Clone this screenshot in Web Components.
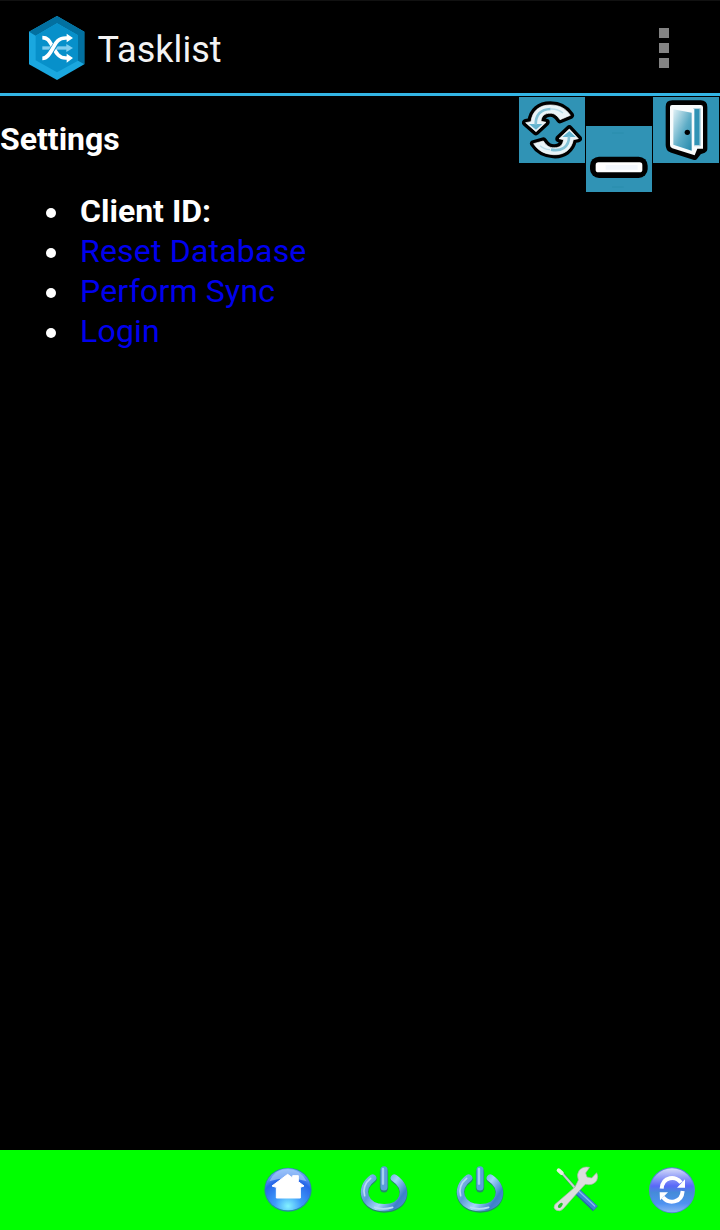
<!DOCTYPE html>
<html lang="en"><head><meta charset="utf-8"><title>Tasklist</title>
<style>html,body{margin:0;height:100%;background:#000}body{overflow:hidden}</style></head>
<body>
<task-app>
  <app-header slot="header">Tasklist</app-header>
  <settings-panel>
    <span slot="title">Settings</span>
    <setting-item strong>Client ID:</setting-item>
    <setting-item>Reset Database</setting-item>
    <setting-item>Perform Sync</setting-item>
    <setting-item>Login</setting-item>
  </settings-panel>
  <quick-actions slot="actions"></quick-actions>
  <bottom-bar slot="footer"></bottom-bar>
</task-app>
<script>
const define = (name, html) => {
  const t = document.createElement('template');
  t.innerHTML = html;
  customElements.define(name, class extends HTMLElement {
    constructor() { super(); this.attachShadow({mode: 'open'}).append(t.content.cloneNode(true)); }
  });
};

define('task-app', `<style>
:host{display:flex;flex-direction:column;width:720px;height:1230px;background:#000;color:#fff;font-family:Roboto,"Liberation Sans",sans-serif}
main{flex:1;display:flex;justify-content:space-between;align-items:flex-start}
</style><slot name="header"></slot><main><slot></slot><slot name="actions"></slot></main><slot name="footer"></slot>`);

define('app-header', `<style>
:host{display:flex;align-items:center;box-sizing:border-box;height:96px;border-top:1px solid #111;border-bottom:3px solid #33b5e5;padding:0 51px 0 28px;color:#f3f3f3}
.logo{width:57px;height:66px;margin-right:12.5px;margin-top:2px}
h1{flex:1;margin:5px 0 0;font-size:36px;font-weight:400;letter-spacing:.05px;line-height:44px}
.menu{display:grid;gap:5px;margin-top:2px}.menu i{width:10px;height:10px;background:#838383}
</style>
<svg class="logo" viewBox="24 15 171 198">
<path fill="#1aa7df" d="M111 18 193 65V163L111 210 27 163V65z"/>
<path fill="#0270a0" d="M111 18 193 65V163L174 152V76L111 40 47 77 27 65z"/>
<path fill="#0790ca" d="M111 40 174 76V152L111 187 47 151V77z"/>
<g fill="none" stroke-width="10"><path stroke="#7fcdef" d="M67 114H143"/><path fill="#7fcdef" stroke="none" d="M139 102 159 114 139 126z"/>
<path stroke="#fff" stroke-width="11" d="M67 83C85 83 89 95 98 110S115 144 137 144H143"/>
<path stroke="#0790ca" stroke-width="16" d="M90 129 110 98"/>
<path stroke="#fff" stroke-width="11" d="M67 145C83 145 91 128 99 114S113 84 137 84H143"/></g>
<path fill="#fff" d="M140 71 159 84 140 97zM140 131 159 144 140 158z"/></svg>
<h1><slot></slot></h1><div class="menu"><i></i><i></i><i></i></div>`);

define('settings-panel', `<style>
:host{display:block;flex:1}
h2{margin:23px 0 32px;font-size:32px;line-height:40px;font-weight:700}
ul{margin:0;padding:0}
</style><h2><slot name="title"></slot></h2><ul><slot></slot></ul>`);

define('setting-item', `<style>
:host{display:flex;align-items:center;height:40px;padding-left:46px;font-size:32px;line-height:40px;color:#0000ee;letter-spacing:.2px}
:host([strong]){color:#fff;font-weight:700;letter-spacing:0}
i{width:10px;height:10px;border-radius:50%;background:#fff;margin:4px 24px 0 0}
</style><i></i><span><slot></slot></span>`);

define('quick-actions', `<style>
:host{display:flex;gap:1px;padding:1px 1px 0 0}
svg{display:block;width:66px;height:66px;background:#3093b5}.low{margin-top:29px}
.soft{filter:blur(1.5px)}
</style>
<svg viewBox="27 21 198 198"><g class="soft" stroke-linejoin="round">
<path stroke="#000" stroke-width="22" d="M47 98 63 95C67 63 88 45 121 45 149 45 168 56 181 76L150 89C139 73 130 68 115 70 99 72 94 82 93 94L108 97 78 125z"/>
<path stroke="#000" stroke-width="22" d="M205 146 190 149C184 180 161 196 130 194 101 192 83 180 71 161L100 153C111 170 121 175 139 173 154 171 159 160 161 149L147 146 178 117z"/>
<path fill="#e9f4f8" stroke="#fff" stroke-width="2" d="M47 98 63 95C67 63 88 45 121 45 149 45 168 56 181 76L150 89C139 73 130 68 115 70 99 72 94 82 93 94L108 97 78 125z"/>
<path fill="#e9f4f8" stroke="#fff" stroke-width="2" d="M205 146 190 149C184 180 161 196 130 194 101 192 83 180 71 161L100 153C111 170 121 175 139 173 154 171 159 160 161 149L147 146 178 117z"/>
<path fill="#63b3ce" d="M57 102H97L78 119zM157 141H197L178 123z"/>
<path fill="none" stroke="#83c2d7" stroke-width="8" d="M77 104C77 72 95 58 122 57M177 139C178 172 153 185 123 179"/>
<path fill="none" stroke="#b9dce8" stroke-width="4" d="M121 57Q143 56 159 69M120 179Q103 178 90 167"/></g></svg>
<svg class="low" viewBox="228 108 198 198"><g class="soft"><rect x="240" y="200" width="173" height="64" rx="27"/><rect x="257" y="217" width="140" height="30" rx="8" fill="#fff"/><path stroke="#f3f7fd" stroke-width="14" d="M287 232H383"/><path stroke="#298dac" stroke-width="3" d="M306 129H341M306 291H341"/></g></svg>
<svg viewBox="429 21 198 198"><defs><linearGradient id="door" x1="0" y1="0" x2="1" y2="1"><stop stop-color="#e1f1f6"/><stop offset=".55" stop-color="#5dacc6"/><stop offset="1" stop-color="#2589ac"/></linearGradient></defs><g class="soft">
<path stroke="#000" stroke-width="22" stroke-linejoin="round" d="M487 42H572Q581 42 581 51V178L566 183 553 199 485 177Q478 174 478 165V50Q478 42 487 42z"/>
<path fill="#f8fbfc" d="M486 45H572Q579 45 579 52V176H562L554 196 487 175Q480 172 480 165V51Q480 45 486 45z"/>
<path fill="url(#door)" d="M490 58 545 68V182L490 164z"/><path fill="#3093b5" d="M553 57H569V165H553z"/><path stroke="#82b8cc" stroke-width="2" fill="none" d="M550 56H571V167H552"/><circle cx="532" cy="127" r="8"/></g></svg>`);

const power = id => `<svg viewBox="30 33 144 144"><defs><linearGradient id="${id}" gradientUnits="userSpaceOnUse" x1="35" y1="65" x2="170" y2="160"><stop stop-color="#8fc4ee"/><stop offset=".3" stop-color="#5b9ad8"/><stop offset=".55" stop-color="#a3d5f8"/><stop offset=".8" stop-color="#3e7fcb"/><stop offset="1" stop-color="#4f94d6"/></linearGradient></defs>
<g class="soft" fill="none" stroke-linecap="round"><path stroke="#238b67" stroke-width="24" d="M68 72C24 104 42 160 102 161S181 104 134 72"/><path stroke="url(#${id})" stroke-width="22" d="M68 69C24 101 42 157 102 158S181 101 133 69"/><path stroke="#b7dcf6" stroke-width="5" d="M62 70C44 84 38 105 44 122M74 157Q98 166 128 157"/><path stroke="#238b67" stroke-width="25" d="M102 50V100"/><path stroke="#5c9edb" stroke-width="21" d="M102 44V96"/><path stroke="#a3cff2" stroke-width="7" d="M99 42V86"/></g></svg>`;

define('bottom-bar', `<style>
:host{display:flex;justify-content:flex-end;align-items:flex-start;gap:48px;box-sizing:border-box;height:80px;padding:16px 24px;background:#0f0}
svg{display:block;width:48px;height:48px}
.soft{filter:blur(1.5px)}
</style>
<svg viewBox="27 33 144 144"><defs><radialGradient id="h" cx=".5" cy=".9" r=".85"><stop stop-color="#83f2ff"/><stop offset=".35" stop-color="#3e9afa"/><stop offset=".75" stop-color="#2867e8"/><stop offset="1" stop-color="#75a7f5"/></radialGradient></defs><g class="soft">
<ellipse cx="99" cy="104" rx="71" ry="66" fill="#278d9e"/><ellipse cx="99" cy="103" rx="68" ry="63" fill="url(#h)"/><path fill="#a8cdfb" opacity=".65" d="M43 79Q61 41 99 42T155 79Q98 61 43 79z"/><path fill="#fff" stroke="#fff" stroke-width="3" stroke-linejoin="round" d="M51 93 98 58 113 69V62H130V80L147 93 136 97V129H64V97z"/></g></svg>
${power('p1')}${power('p2')}
<svg viewBox="36 33 144 144"><g class="soft"><g stroke-linecap="round" fill="none">
<path stroke="#489968" stroke-width="9" d="M64 52 108 102"/><path stroke="#c8d4ce" stroke-width="6" d="M64 52 108 102"/><path stroke="#e5efe2" stroke-width="12" d="M56 46 65 54"/>
<path stroke="#2868a7" stroke-width="21" stroke-linecap="butt" d="M108 106 166 161"/><path stroke="#3c83d4" stroke-width="16" stroke-linecap="butt" d="M109 105 167 159"/><path stroke="#83bbf1" stroke-width="4" d="M117 109 164 153"/></g>
<path fill="#dcddde" stroke="#9eb29f" stroke-width="2" d="M149 37Q128 32 117 47 109 58 115 75L105 96 45 148Q38 158 47 165 60 172 70 161L117 108 136 88Q159 93 170 77 176 65 170 53L155 69 141 66 137 54z"/><ellipse cx="61" cy="151" rx="5" ry="9" transform="rotate(40 61 151)" fill="#24c628"/></g></svg>
<svg viewBox="39 33 144 144"><defs><linearGradient id="s" x1="0" y1="0" x2="0" y2="1"><stop stop-color="#d5dcfa"/><stop offset=".2" stop-color="#949ff8"/><stop offset=".4" stop-color="#5968f8"/><stop offset=".55" stop-color="#458bd9"/><stop offset=".8" stop-color="#4e92f0"/><stop offset="1" stop-color="#8bb6f3"/></linearGradient></defs><g class="soft">
<circle cx="111" cy="106" r="69" fill="#5584d4"/><circle cx="111" cy="106" r="66" fill="url(#s)"/><g fill="none" stroke="#fff" stroke-width="12"><path d="M80 101C83 64 123 61 138 83M143 108C140 145 101 148 84 127"/></g><path fill="#fff" d="M150 73V98H126zM74 112H99L75 136z"/></g></svg>`);
</script>
</body></html>
